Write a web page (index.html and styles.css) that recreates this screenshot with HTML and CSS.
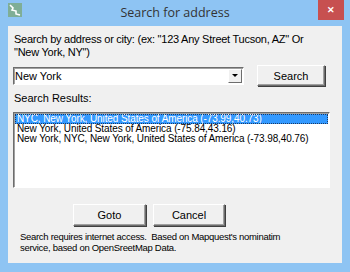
FILE: index.html
```html
<!DOCTYPE html>
<html lang="en">
<head>
  <meta charset="UTF-8" />
  <title>Search for address</title>
  <link rel="stylesheet" href="styles.css">
</head>
<body>
  <div class="window">
    <!-- Title bar -->
    <div class="titlebar">
      <svg class="app-icon" width="14" height="14" viewBox="0 0 14 14">
        <rect width="14" height="14" fill="#7fae96"/>
        <path d="M2 2 L5 5 L4 7 L8 8 L8 11 L12 12" fill="none" stroke="#fff" stroke-width="1.6"/>
      </svg>
      <div class="title">Search for address</div>
      <div class="close">&#x2715;</div>
    </div>

    <!-- Dialog body -->
    <div class="client">
      <p class="prompt">Search by address or city: (ex: "123 Any Street Tucson, AZ" Or<br>"New York, NY")</p>

      <div class="search-row">
        <div class="combo">
          <span class="combo-text">New York</span>
          <span class="combo-btn"><span class="arrow"></span></span>
        </div>
        <button class="btn search-btn">Search</button>
      </div>

      <p class="label">Search Results:</p>
      <ul class="results">
        <li class="selected">NYC, New York, United States of America (-73.99,40.73)</li>
        <li>New York, United States of America (-75.84,43.16)</li>
        <li>New York, NYC, New York, United States of America (-73.98,40.76)</li>
      </ul>

      <div class="actions">
        <button class="btn goto-btn">Goto</button>
        <button class="btn cancel-btn">Cancel</button>
      </div>

      <p class="note">Search requires internet access.&nbsp; Based on Mapquest's nominatim<br>service, based on OpenSreetMap Data.</p>
    </div>
  </div>
</body>
</html>
```

FILE: styles.css
```css
body {
  margin: 0;
  font-family: "Liberation Sans", Arial, sans-serif;
  font-size: 11px;
  color: #000;
}

.window {
  width: 350px;
  height: 272px;
  box-sizing: border-box;
  background: #8ec4f3;
  padding: 0 8px 9px 8px;
  display: flex;
  flex-direction: column;
}

/* Title bar */
.titlebar {
  height: 26px;
  display: grid;
  grid-template-columns: 26px 1fr 26px;
  align-items: start;
}

.app-icon {
  margin-top: 3px;
}

.title {
  text-align: center;
  font-family: "Open Sans", sans-serif;
  font-size: 12.5px;
  color: #333;
  padding-top: 4px;
}

.close {
  width: 26px;
  height: 20px;
  margin-left: 2px;
  background: #c75050;
  color: #fff;
  font-size: 9px;
  font-weight: bold;
  text-align: center;
  line-height: 20px;
}

/* Dialog body */
.client {
  flex: 1;
  background: #f0f0f0;
  padding: 7px 12px 0 5px;
}

.prompt {
  margin: 0 0 0 1px;
  font-size: 11px;
  line-height: 13px;
  letter-spacing: -0.25px;
}

.search-row {
  display: flex;
  align-items: center;
  margin-top: 6px;
}

.combo {
  width: 231px;
  height: 18px;
  box-sizing: border-box;
  background: #fff;
  border: 1px solid;
  border-color: #6d6d6d #fff #fff #6d6d6d;
  box-shadow: inset 1px 1px 0 #a0a0a0;
  display: flex;
  align-items: center;
  justify-content: space-between;
}

.combo-text {
  padding-left: 1px;
  font-size: 11px;
}

.combo-btn {
  width: 14px;
  height: 14px;
  margin-right: 1px;
  box-sizing: border-box;
  background: #f0f0f0;
  border: 1px solid;
  border-color: #fff #6d6d6d #6d6d6d #fff;
  display: flex;
  align-items: center;
  justify-content: center;
}

.arrow {
  border-left: 3px solid transparent;
  border-right: 3px solid transparent;
  border-top: 3px solid #000;
}

.btn {
  font-family: "Liberation Sans", Arial, sans-serif;
  font-size: 11px;
  color: #000;
  background: #f0f0f0;
  border: 1px solid;
  border-color: #fff #6d6d6d #6d6d6d #fff;
  box-shadow: inset -1px -1px 0 #a0a0a0, 1px 1px 0 #404040;
  padding: 0;
}

.search-btn {
  width: 68px;
  height: 21px;
  margin-left: 13px;
}

.label {
  margin: 6px 0 0 1px;
  font-size: 11px;
  line-height: 13px;
}

.results {
  list-style: none;
  margin: 7px 0 0 0;
  padding: 1px 1px;
  width: 317px;
  height: 76px;
  box-sizing: border-box;
  background: #fff;
  border: 1px solid;
  border-color: #6d6d6d #fff #fff #6d6d6d;
  box-shadow: inset 1px 1px 0 #a0a0a0;
}

.results li {
  height: 10px;
  line-height: 10px;
  font-size: 10px;
  letter-spacing: -0.1px;
  padding-left: 2px;
  white-space: nowrap;
}

.results li.selected {
  background: #3399ff;
  color: #fff;
  outline: 1px dotted #1a3a66;
  outline-offset: -1px;
}

.actions {
  display: flex;
  gap: 7px;
  margin: 16px 0 0 60px;
}

.goto-btn {
  width: 73px;
  height: 22px;
}

.cancel-btn {
  width: 72px;
  height: 22px;
}

.note {
  margin: 5px 0 0 7px;
  font-size: 9.5px;
  line-height: 11px;
  letter-spacing: -0.3px;
}
```
